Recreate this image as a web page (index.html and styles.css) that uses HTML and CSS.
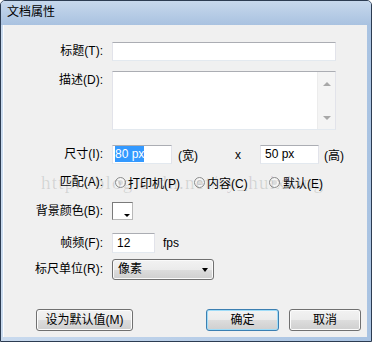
FILE: index.html
```html
<!DOCTYPE html>
<html lang="zh-CN">
<head>
    <meta charset="UTF-8">
    <title>文档属性</title>
    <link rel="stylesheet" href="styles.css">
</head>
<body>
    <div class="window">
        <div class="titlebar">文档属性</div>

        <div class="client">
            <!-- Form rows -->
            <div class="row row-title">
                <div class="lbl">标题(T):</div>
                <div class="field wide"></div>
            </div>

            <div class="row row-desc">
                <div class="lbl">描述(D):</div>
                <div class="field area">
                    <div class="scrollbar">
                        <span class="arrow-up"></span>
                        <span class="arrow-down"></span>
                    </div>
                </div>
            </div>

            <div class="row row-size">
                <div class="lbl">尺寸(I):</div>
                <div class="field size"><span class="selected">80 px</span></div>
                <span class="unit-w">(宽)</span>
                <span class="times">x</span>
                <div class="field size size-h">50 px</div>
                <span class="unit-h">(高)</span>
            </div>

            <div class="row row-match">
                <div class="lbl">匹配(A):</div>
                <div class="radio r1"><span class="dot"></span>打印机(P)</div>
                <div class="radio r2"><span class="dot"></span>内容(C)</div>
                <div class="radio r3"><span class="dot"></span>默认(E)</div>
            </div>

            <div class="row row-color">
                <div class="lbl">背景颜色(B):</div>
                <div class="swatch"><span class="swatch-arrow"></span></div>
            </div>

            <div class="row row-fps">
                <div class="lbl">帧频(F):</div>
                <div class="field fps">12</div>
                <span class="fps-unit">fps</span>
            </div>

            <div class="row row-ruler">
                <div class="lbl">标尺单位(R):</div>
                <div class="combo">像素<span class="combo-arrow"></span></div>
            </div>

            <!-- Dialog buttons -->
            <div class="buttons">
                <div class="btn btn-default-set">设为默认值(M)</div>
                <div class="btn btn-ok">确定</div>
                <div class="btn btn-cancel">取消</div>
            </div>

            <div class="watermark">http://blog.csdn.net/sy_huixiang</div>
        </div>
    </div>
</body>
</html>
```

FILE: styles.css
```css
/* Global */
body {
    margin: 0;
    font-family: "Liberation Sans", "Noto Sans CJK SC", sans-serif;
    font-size: 12px;
    color: #000;
    background: #fff;
}

/* Window frame */
.window {
    width: 372px;
    height: 342px;
    box-sizing: border-box;
    border: 1px solid #2c3c52;
    border-radius: 5px 5px 0 0;
    background: linear-gradient(to right, #c9daee, #a9c3e2);
    display: flex;
    flex-direction: column;
    overflow: hidden;
}

.titlebar {
    height: 24px;
    line-height: 23px;
    padding-left: 6px;
    font-size: 12px;
    background: linear-gradient(to bottom, #c7d8ec, #a9c2e0);
    flex-shrink: 0;
}

.client {
    position: relative;
    flex: 1;
    margin: 0 4px 4px 2px;
    padding-top: 17px;
    background: #f0f0f0;
    border-left: 1px solid #fafcfe;
    box-sizing: border-box;
}

/* Rows */
.row {
    display: flex;
    align-items: center;
}

.lbl {
    width: 99px;
    margin-right: 9px;
    text-align: right;
    line-height: 19px;
    white-space: nowrap;
}

.row-title { height: 19px; }
.row-desc { height: 59px; margin-top: 10px; align-items: flex-start; }
.row-size { height: 19px; margin-top: 15px; }
.row-match { height: 16px; margin-top: 10px; }
.row-color { height: 18px; margin-top: 12px; }
.row-fps { height: 20px; margin-top: 13px; }
.row-ruler { height: 21px; margin-top: 6px; }

/* Text fields */
.field {
    box-sizing: border-box;
    height: 19px;
    line-height: 17px;
    padding-left: 4px;
    background: #fff;
    border: 1px solid #e2e3ea;
    border-top-color: #abadb3;
    border-bottom-color: #e3e9ef;
}

.wide { width: 224px; }

.area {
    position: relative;
    width: 224px;
    height: 59px;
}

.scrollbar {
    position: absolute;
    top: 0;
    right: 0;
    width: 17px;
    height: 100%;
    background: #f4f4f4;
    border-left: 1px solid #ececec;
}

.arrow-up, .arrow-down {
    position: absolute;
    left: 5px;
    width: 0;
    height: 0;
    border-left: 4px solid transparent;
    border-right: 4px solid transparent;
}

.arrow-up {
    top: 10px;
    border-bottom: 4px solid #a8a8a8;
}

.arrow-down {
    bottom: 9px;
    border-top: 4px solid #a8a8a8;
}

/* Size row */
.size { width: 60px; padding-left: 2px; }
.size-h { width: 59px; margin-left: 19px; padding-left: 4px; }

.selected {
    background: #3399ff;
    color: #fff;
    padding: 1px 0 1px 0;
}

.unit-w { margin-left: 6px; }
.times { margin-left: 37px; }
.unit-h { margin-left: 5px; }

/* Radios */
.radio {
    display: flex;
    align-items: center;
    white-space: nowrap;
}

.r1 { width: 79px; margin-left: 3px; }
.r2 { width: 75px; }

.dot {
    width: 11px;
    height: 11px;
    box-sizing: border-box;
    margin-right: 2px;
    border: 1px solid #8e8f8f;
    border-radius: 50%;
    background: #dcdcdc;
    box-shadow: inset 0 0 0 2px #f6f6f6;
}

.r3 .dot { margin-right: 3px; }

/* Colour swatch */
.swatch {
    position: relative;
    width: 21px;
    height: 18px;
    box-sizing: border-box;
    background: #fff;
    border: 1px solid #7a7a7a;
    border-right-color: #b8b8b8;
    border-bottom-color: #b8b8b8;
}

.swatch-arrow {
    position: absolute;
    right: 2px;
    bottom: 2px;
    width: 0;
    height: 0;
    border-left: 3px solid transparent;
    border-right: 3px solid transparent;
    border-top: 3px solid #000;
}

/* Frame rate */
.fps { width: 43px; height: 20px; line-height: 18px; }
.fps-unit { margin-left: 8px; }

/* Combo box */
.combo {
    position: relative;
    width: 102px;
    height: 21px;
    box-sizing: border-box;
    line-height: 19px;
    padding-left: 5px;
    border: 1px solid #707070;
    border-radius: 3px;
    background: linear-gradient(to bottom, #f2f2f2 0%, #ebebeb 50%, #dddddd 50%, #cfcfcf 100%);
    box-shadow: inset 0 0 0 1px #fafafa;
}

.combo-arrow {
    position: absolute;
    right: 5px;
    top: 8px;
    width: 0;
    height: 0;
    border-left: 3.5px solid transparent;
    border-right: 3.5px solid transparent;
    border-top: 4px solid #000;
}

/* Buttons */
.buttons {
    display: flex;
    margin-top: 29px;
    padding-left: 32px;
    padding-right: 6px;
}

.btn {
    height: 22px;
    box-sizing: border-box;
    line-height: 20px;
    text-align: center;
    border: 1px solid #707070;
    border-radius: 3px;
    background: linear-gradient(to bottom, #f2f2f2 0%, #ebebeb 50%, #dddddd 50%, #cfcfcf 100%);
    box-shadow: inset 0 0 0 1px #fcfcfc;
}

.btn-default-set { width: 97px; }

.btn-ok {
    width: 73px;
    margin-left: auto;
    border-color: #3c7fb1;
    box-shadow: inset 0 0 0 1px #9fdcf8;
}

.btn-cancel {
    width: 72px;
    margin-left: 10px;
}

/* Watermark over the form */
.watermark {
    position: absolute;
    left: 37px;
    top: 147px;
    font-family: "Liberation Serif", serif;
    font-size: 19px;
    letter-spacing: 1.2px;
    color: rgba(0, 0, 0, 0.12);
    white-space: nowrap;
    pointer-events: none;
}
```
